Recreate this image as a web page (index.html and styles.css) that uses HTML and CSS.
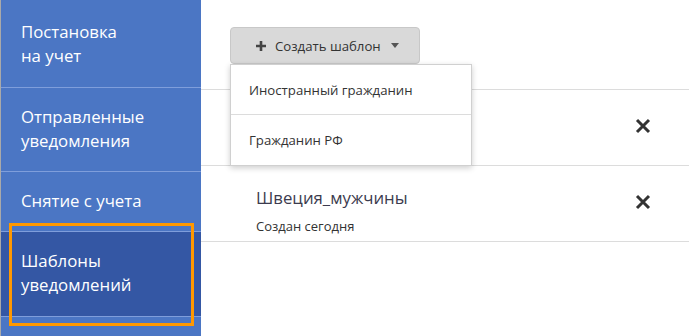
FILE: index.html
```html
<!DOCTYPE html>
<html lang="ru">

<head>
    <meta charset="UTF-8">
    <meta name="viewport" content="width=device-width, initial-scale=1.0">
    <title>Шаблоны уведомлений</title>
    <link rel="stylesheet" href="styles.css">
</head>

<body>
    <div id="layout">
        <!-- sidebar -->
        <ul id="menu">
            <li class="menu-item first">Постановка<br>на учет</li>
            <li class="menu-item">Отправленные<br>уведомления</li>
            <li class="menu-item">Снятие с учета</li>
            <li class="menu-item active">Шаблоны<br>уведомлений</li>
        </ul>

        <!-- templates -->
        <div id="main">
            <div class="toolbar">
                <button class="create-btn">
                    <svg class="plus" width="10" height="10" viewBox="0 0 10 10">
                        <path d="M5 0 V10 M0 5 H10" stroke="#444" stroke-width="2.6" />
                    </svg>
                    Создать шаблон
                    <span class="caret"></span>
                </button>
                <div class="dropdown">
                    <div class="dropdown-item">Иностранный гражданин</div>
                    <div class="dropdown-item">Гражданин РФ</div>
                </div>
            </div>
            <div class="row">
                <!-- covered by the open dropdown -->
                <div class="row-info"></div>
                <svg class="remove" width="16" height="16" viewBox="0 0 16 16">
                    <path d="M2 2 L14 14 M14 2 L2 14" stroke="#333" stroke-width="3" />
                </svg>
            </div>
            <div class="row">
                <div class="row-info">
                    <div class="row-title">Швеция_мужчины</div>
                    <div class="row-date">Создан сегодня</div>
                </div>
                <svg class="remove" width="16" height="16" viewBox="0 0 16 16">
                    <path d="M2 2 L14 14 M14 2 L2 14" stroke="#333" stroke-width="3" />
                </svg>
            </div>
        </div>
    </div>
</body>

</html>
```

FILE: styles.css
```css
* {
    margin: 0;
    padding: 0;
    box-sizing: border-box;
}

body,
html {
    height: 100%;
    width: 100%;
    font-family: "Open Sans", "Noto Sans", sans-serif;
    background: #fff;
    overflow: hidden;
}

#layout {
    display: flex;
    height: 100%;
}

#menu {
    list-style: none;
    width: 201px;
    flex-shrink: 0;
    background-color: #4b76c4;
    border-left: 1px solid #a9a9a9;
}

.menu-item {
    position: relative;
    padding: 17px 10px 18px 20px;
    font-size: 16.8px;
    line-height: 24px;
    color: #fff;
    border-bottom: 1px solid #7f9edb;
}

.menu-item.first {
    padding-top: 20px;
    padding-bottom: 19px;
}

.menu-item.active {
    padding-bottom: 19px;
    background-color: #3457a4;
}

.menu-item.active::after {
    content: "";
    position: absolute;
    top: -9px;
    bottom: -10px;
    left: 8px;
    right: 7px;
    border: 3px solid #ff9800;
}

#main {
    flex: 1;
    position: relative;
}

.toolbar {
    height: 90px;
    padding: 27px 0 0 29px;
    border-bottom: 1px solid #dcdcdc;
}

.create-btn {
    display: flex;
    align-items: center;
    gap: 7px;
    height: 37px;
    width: 190px;
    padding-left: 25px;
    background-color: #d9d9d9;
    border: 1px solid #c8c8c8;
    border-radius: 4px;
    font-family: inherit;
    font-size: 13.2px;
    color: #333;
}

.plus {
    display: block;
    margin-right: 2px;
}

.caret {
    width: 0;
    height: 0;
    border-left: 4px solid transparent;
    border-right: 4px solid transparent;
    border-top: 5px solid #555;
    margin-left: 3px;
}

.dropdown {
    position: absolute;
    top: 64px;
    left: 29px;
    width: 242px;
    background: #fff;
    border: 1px solid #d0d0d0;
    box-shadow: 0 2px 6px rgba(0, 0, 0, 0.2);
    z-index: 2;
}

.dropdown-item {
    height: 50px;
    padding-left: 18px;
    display: flex;
    align-items: center;
    font-size: 13.2px;
    color: #333;
}

.dropdown-item:first-child {
    border-bottom: 1px solid #dcdcdc;
}

.row {
    height: 76px;
    display: flex;
    align-items: flex-start;
    justify-content: space-between;
    padding: 20px 38px 0 55px;
    border-bottom: 1px solid #dcdcdc;
}

.row-title {
    font-size: 16.8px;
    line-height: 24px;
    color: #3c3b4e;
}

.row-date {
    margin-top: 7px;
    font-size: 13px;
    line-height: 18px;
    color: #333;
}

.remove {
    display: block;
    margin-top: 8px;
}
```
